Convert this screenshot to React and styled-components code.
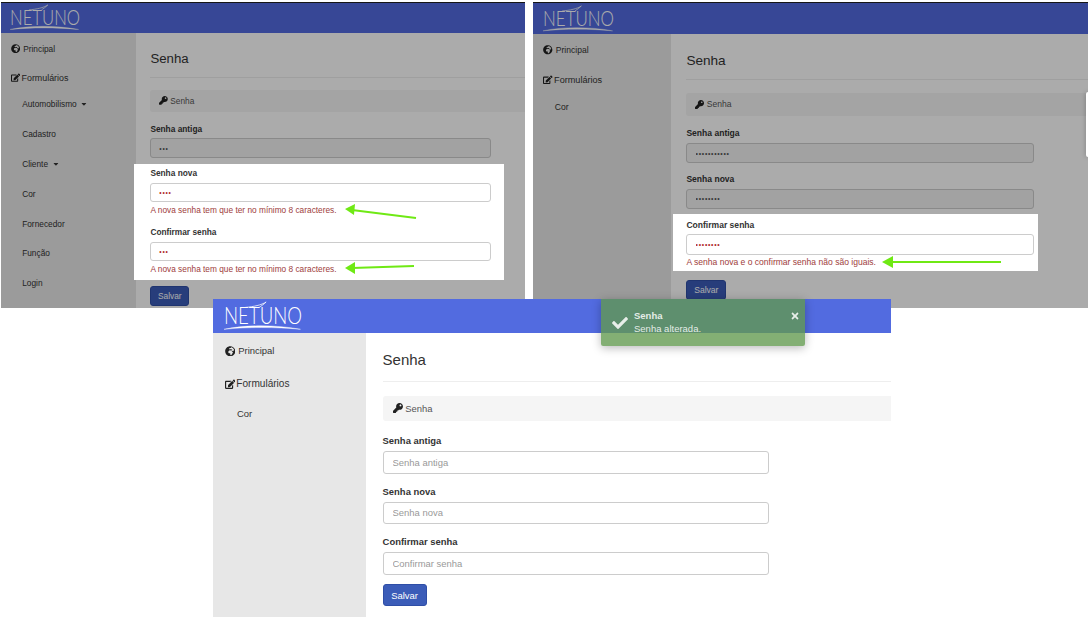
import styled, { createGlobalStyle } from "styled-components";
import {
  FaCaretDown,
  FaCheck,
  FaEdit,
  FaGlobeAfrica,
  FaKey,
  FaTimes,
} from "react-icons/fa";

const GlobalStyle = createGlobalStyle`
  html, body {
    margin: 0;
    padding: 0;
    background: #fff;
    overflow: hidden;
  }
  body {
    font-family: "Liberation Sans", Arial, sans-serif;
    color: #333;
  }
`;

const Canvas = styled.div`
  width: 1088px;
  height: 617px;
  overflow: hidden;
  background: #fff;
`;

const TopRow = styled.div`
  display: flex;
  height: 297px;
  padding: 2px 0 0 1px;
  gap: 8px;
`;

const Screen = styled.div`
  position: relative;
  flex: none;
  display: flex;
  flex-direction: column;
  width: ${(p) => p.$width}px;
  height: ${(p) => p.$height}px;
  font-size: ${(p) => p.$size}px;
  overflow: hidden;
  isolation: isolate;
  background: #fff;
`;

const BottomScreen = styled(Screen)`
  margin-left: 213px;
  overflow: visible;
  z-index: 5;
`;

const Dim = styled.div`
  position: absolute;
  inset: 0;
  background: rgba(0, 0, 0, 0.33);
  z-index: 1;
`;

const Header = styled.header`
  flex: none;
  box-sizing: border-box;
  display: flex;
  align-items: center;
  height: ${(p) => p.$height}px;
  padding-left: 1em;
  background: #526be0;
  border-top: ${(p) => (p.$edge ? "1px solid #222" : "0")};
`;

const LogoMark = styled.svg`
  overflow: visible;
`;

const LogoText = styled.text`
  font-family: Lato, "Liberation Sans", sans-serif;
  font-weight: 300;
  font-size: 30px;
  fill: #fff;
`;

const Body = styled.div`
  flex: 1;
  display: flex;
  min-height: 0;
`;

const Sidebar = styled.nav`
  flex: none;
  width: 14.55em;
  padding-top: 0.14em;
  background: #e7e7e7;
`;

const MainItem = styled.div`
  display: flex;
  align-items: center;
  gap: ${(p) => p.$gap};
  height: 3.14em;
  padding-left: 1.1em;
  color: #333;

  span {
    font-size: ${(p) => p.$text};
  }

  svg {
    flex: none;
    font-size: 1em;
    color: #222;
  }
`;

const SubList = styled.div`
  margin-top: -0.4em;
`;

const SubItem = styled.div`
  display: flex;
  align-items: center;
  gap: 0.4em;
  height: 3.24em;
  padding-left: 2.29em;
  color: #333;

  span {
    font-size: 0.9em;
  }

  svg {
    font-size: 0.85em;
  }
`;

const Main = styled.main`
  flex: 1;
  min-width: 0;
  padding-left: 1.6em;
`;

const TitleRow = styled.div`
  padding: calc(1.57em + ${(p) => p.$drop}px) 0 1em;
  line-height: 2em;
  border-bottom: 1px solid #eee;
`;

const Title = styled.h1`
  margin: 0;
  font-size: 1.43em;
  font-weight: 400;
  color: #333;
`;

const Crumb = styled.div`
  display: flex;
  align-items: center;
  gap: 0.25em;
  height: 2.38em;
  margin-top: calc(1.33em - ${(p) => p.$squeeze}px);
  padding-left: 0.95em;
  border-radius: 3px 0 0 3px;
  background: #f5f5f5;
  color: #555;

  span {
    font-size: 0.9em;
  }

  svg {
    font-size: 0.95em;
    color: #222;
  }
`;

const Form = styled.form`
  margin-top: 0.9em;
`;

const Field = styled.div`
  width: ${(p) => p.$w || "36.8em"};
  margin-bottom: ${(p) => (p.$last ? "0" : "0.69em")};
`;

const Label = styled.label`
  display: flex;
  align-items: center;
  height: 2.2em;
  font-size: 0.9em;
  font-weight: 700;
  color: #333;
  line-height: 1;
`;

const Input = styled.input`
  display: block;
  box-sizing: border-box;
  width: 100%;
  height: 2.38em;
  padding: 0 0.95em;
  font: inherit;
  font-size: 0.9em;
  color: #555;
  background: #fff;
  border: 1px solid #ccc;
  border-radius: 3px;
  outline: none;

  &::placeholder {
    color: #999;
    opacity: 1;
  }
`;

// the typed passwords: small dots, read only
const MaskedInput = styled(Input)`
  height: 2.97em;
  padding: 0 1.2em;
  font-size: 0.72em;
  letter-spacing: 0.7px;
  color: ${(p) => (p.$error ? "#b02a2a" : "#555")};
  background: ${(p) => (p.$error ? "#fff" : "#f2f2f2")};
`;

const ErrorText = styled.div`
  display: flex;
  align-items: center;
  height: 1.75em;
  font-size: 0.9em;
  line-height: 1;
  color: #9e3d3b;
  white-space: nowrap;
`;

const Spot = styled.div`
  position: relative;
  z-index: 2;
  box-sizing: border-box;
  width: ${(p) => p.$width}px;
  margin: ${(p) => p.$top} 0 calc(1.1em - ${(p) => p.$bottom}) -${(p) => p.$left}px;
  padding: ${(p) => p.$pad} 0 ${(p) => p.$bottom} ${(p) => p.$left}px;
  background: #fff;
`;

const Arrow = styled.svg`
  position: absolute;
  left: ${(p) => p.$x}px;
  top: ${(p) => p.$y}px;
`;

const SaveButton = styled.button`
  display: block;
  width: 4.2em;
  height: 2.1em;
  padding: 0;
  margin-top: ${(p) => p.$top || "0"};
  font: inherit;
  color: #fff;
  background: #3b5cb8;
  border: 1px solid #2f4ea6;
  border-radius: 3px;

  span {
    font-size: 0.9em;
  }
`;

const Toast = styled.div`
  position: absolute;
  z-index: 3;
  top: 0;
  left: 388px;
  display: flex;
  align-items: flex-start;
  box-sizing: border-box;
  width: 204px;
  height: 47px;
  padding: 10px 5px 0 11px;
  background: rgba(98, 153, 79, 0.79);
  border-radius: 0 0 2px 2px;
  box-shadow: 0 2px 10px rgba(0, 0, 0, 0.28);
  color: rgba(255, 255, 255, 0.85);
`;

const ToastIcon = styled.div`
  flex: none;
  width: 22px;
  padding-top: 6px;
  font-size: 16px;
  line-height: 1;
`;

const ToastText = styled.div`
  flex: 1;
  font-size: 9.5px;
  line-height: 13px;

  strong {
    display: block;
  }
`;

const ToastClose = styled.div`
  flex: none;
  padding-top: 2px;
  font-size: 10px;
  line-height: 13px;
`;

const EdgeTab = styled.div`
  position: absolute;
  z-index: 2;
  right: 0;
  top: 90px;
  width: 2px;
  height: 65px;
  border-radius: 3px 0 0 3px;
  background: #fff;
  box-shadow: 0 0 4px rgba(0, 0, 0, 0.35);
`;

const Logo = ({ width }) => (
  <LogoMark width={width} height={width * 0.36} viewBox="0 0 100 36">
    <LogoText x="0" y="28" textLength="100" lengthAdjust="spacingAndGlyphs">
      NETUNO
    </LogoText>
    <path
      d="M27 7 C38 6 48 4 54 0 C51 3 48 5 45 7"
      fill="none"
      stroke="#fff"
      strokeWidth="1"
    />
    <path
      d="M0 35 C28 29 66 29 98 35 C66 32 30 32 0 35 Z"
      fill="#fff"
      stroke="#fff"
      strokeWidth="0.5"
    />
  </LogoMark>
);

const GreenArrow = ({ x, y, w, h, line, head }) => (
  <Arrow $x={x} $y={y} width={w} height={h} viewBox={`0 0 ${w} ${h}`}>
    <path d={line} stroke="#6fe914" strokeWidth="2" fill="none" />
    <path d={head} fill="#6fe914" />
  </Arrow>
);

const MainMenu = () => (
  <>
    <MainItem $gap="0.3em" $text="0.9em">
      <FaGlobeAfrica />
      <span>Principal</span>
    </MainItem>
    <MainItem $gap="0.12em" $text="0.96em">
      <FaEdit />
      <span>Formulários</span>
    </MainItem>
  </>
);

const Breadcrumb = ({ drop = 0, squeeze = 0 }) => (
  <>
    <TitleRow $drop={drop}>
      <Title>Senha</Title>
    </TitleRow>
    <Crumb $squeeze={squeeze}>
      <FaKey />
      <span>Senha</span>
    </Crumb>
  </>
);

const errorShort = "A nova senha tem que ter no mínimo 8 caracteres.";

const App = () => (
  <Canvas>
    <GlobalStyle />
    <TopRow>
      <Screen $width={524} $height={306} $size={9.25}>
        <Dim />
        <Header $height={31} $edge>
          <Logo width={70} />
        </Header>
        <Body>
          <Sidebar>
            <MainMenu />
            <SubList>
              <SubItem>
                <span>Automobilismo</span>
                <FaCaretDown />
              </SubItem>
              <SubItem>
                <span>Cadastro</span>
              </SubItem>
              <SubItem>
                <span>Cliente</span>
                <FaCaretDown />
              </SubItem>
              <SubItem>
                <span>Cor</span>
              </SubItem>
              <SubItem>
                <span>Fornecedor</span>
              </SubItem>
              <SubItem>
                <span>Função</span>
              </SubItem>
              <SubItem>
                <span>Login</span>
              </SubItem>
            </SubList>
          </Sidebar>
          <Main>
            <Breadcrumb drop={2} squeeze={1} />
            <Form>
              <Field>
                <Label>Senha antiga</Label>
                <MaskedInput type="password" defaultValue="abc" readOnly />
              </Field>
              <Spot $left={16} $width={370} $top="0" $pad="0" $bottom="0.45em">
                <Field>
                  <Label>Senha nova</Label>
                  <MaskedInput type="password" defaultValue="abcd" readOnly $error />
                  <ErrorText>{errorShort}</ErrorText>
                </Field>
                <Field $last>
                  <Label>Confirmar senha</Label>
                  <MaskedInput type="password" defaultValue="abc" readOnly $error />
                  <ErrorText>{errorShort}</ErrorText>
                </Field>
                <GreenArrow
                  x={210}
                  y={38}
                  w={74}
                  h={20}
                  line="M8 8 L72 16"
                  head="M1 7 L11 2 L10 13 Z"
                />
                <GreenArrow
                  x={210}
                  y={94}
                  w={74}
                  h={20}
                  line="M8 10 L70 8"
                  head="M1 10 L11 4 L11 16 Z"
                />
              </Spot>
              <SaveButton type="button">
                <span>Salvar</span>
              </SaveButton>
            </Form>
          </Main>
        </Body>
      </Screen>

      <Screen $width={555} $height={306} $size={9.5}>
        <Dim />
        <EdgeTab />
        <Header $height={32} $edge>
          <Logo width={71} />
        </Header>
        <Body>
          <Sidebar>
            <MainMenu />
            <SubList>
              <SubItem>
                <span>Cor</span>
              </SubItem>
            </SubList>
          </Sidebar>
          <Main>
            <Breadcrumb drop={2} squeeze={0} />
            <Form>
              <Field $w="36.63em">
                <Label>Senha antiga</Label>
                <MaskedInput type="password" defaultValue="abcdefghijk" readOnly />
              </Field>
              <Field $w="36.63em">
                <Label>Senha nova</Label>
                <MaskedInput type="password" defaultValue="abcdefgh" readOnly />
              </Field>
              <Spot $left={13} $width={365} $top="-0.15em" $pad="0.15em" $bottom="0.15em">
                <Field $last $w="36.63em">
                  <Label>Confirmar senha</Label>
                  <MaskedInput type="password" defaultValue="abcdefgh" readOnly $error />
                  <ErrorText>A senha nova e o confirmar senha não são iguais.</ErrorText>
                </Field>
                <GreenArrow
                  x={208}
                  y={39}
                  w={122}
                  h={18}
                  line="M8 9 L120 9"
                  head="M1 9 L12 3 L12 15 Z"
                />
              </Spot>
              <SaveButton type="button">
                <span>Salvar</span>
              </SaveButton>
            </Form>
          </Main>
        </Body>
      </Screen>
    </TopRow>

    <BottomScreen $width={678} $height={318} $size={10.5}>
      <Toast>
        <ToastIcon>
          <FaCheck />
        </ToastIcon>
        <ToastText>
          <strong>Senha</strong>
          Senha alterada.
        </ToastText>
        <ToastClose>
          <FaTimes />
        </ToastClose>
      </Toast>
      <Header $height={34}>
        <Logo width={78} />
      </Header>
      <Body>
        <Sidebar>
          <MainMenu />
          <SubList>
            <SubItem>
              <span>Cor</span>
            </SubItem>
          </SubList>
        </Sidebar>
        <Main>
          <Breadcrumb />
          <Form>
            <Field>
              <Label>Senha antiga</Label>
              <Input type="password" placeholder="Senha antiga" />
            </Field>
            <Field>
              <Label>Senha nova</Label>
              <Input type="password" placeholder="Senha nova" />
            </Field>
            <Field>
              <Label>Confirmar senha</Label>
              <Input type="password" placeholder="Confirmar senha" />
            </Field>
            <SaveButton type="button" $top="0.9em">
              <span>Salvar</span>
            </SaveButton>
          </Form>
        </Main>
      </Body>
    </BottomScreen>
  </Canvas>
);

export default App;
